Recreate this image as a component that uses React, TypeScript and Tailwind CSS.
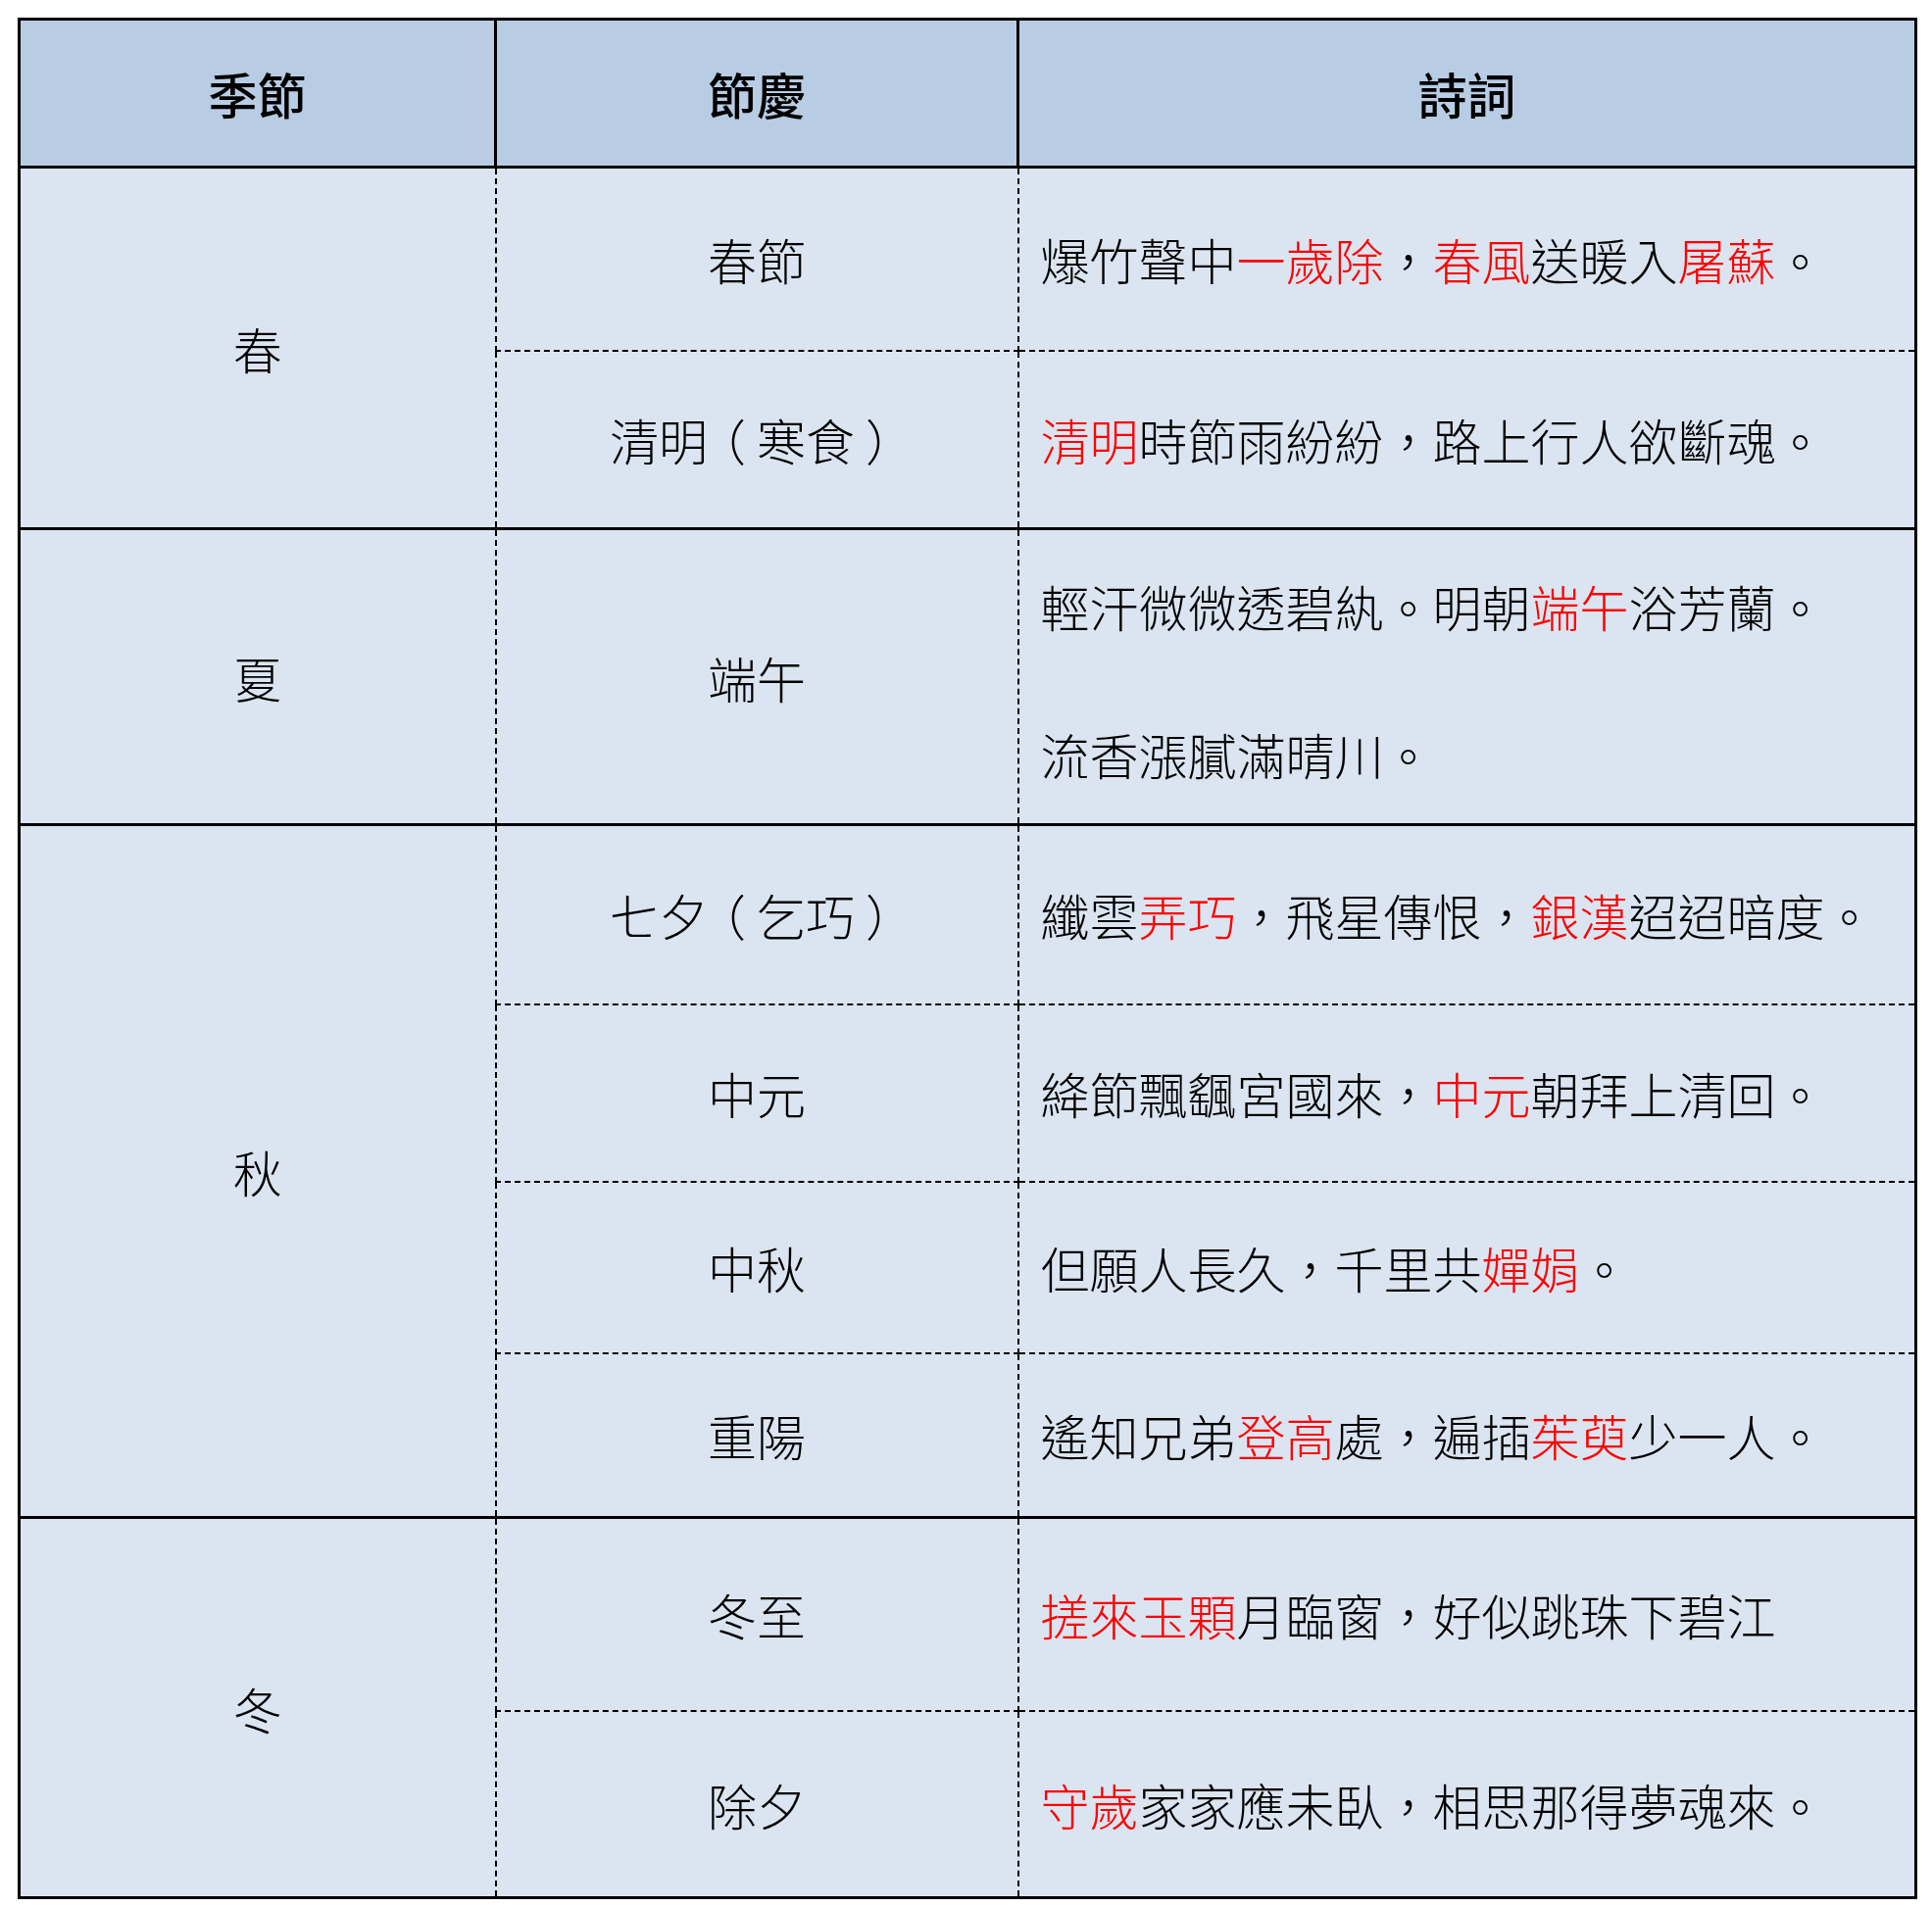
import React from 'react';

type Row = { fest: string; h: string; poem: string[] };
type Season = { name: string; rows: Row[] };

// {…} marks the words printed in red
const seasons: Season[] = [
  {
    name: '春',
    rows: [
      { fest: '春節', h: 'h-[187px]', poem: ['爆竹聲中{一歲除}，{春風}送暖入{屠蘇}。'] },
      { fest: '清明（寒食）', h: 'h-[182px]', poem: ['{清明}時節雨紛紛，路上行人欲斷魂。'] },
    ],
  },
  {
    name: '夏',
    rows: [
      { fest: '端午', h: 'h-[302px]', poem: ['輕汗微微透碧紈。明朝{端午}浴芳蘭。', '流香漲膩滿晴川。'] },
    ],
  },
  {
    name: '秋',
    rows: [
      { fest: '七夕（乞巧）', h: 'h-[183px]', poem: ['纖雲{弄巧}，飛星傳恨，{銀漢}迢迢暗度。'] },
      { fest: '中元', h: 'h-[181px]', poem: ['絳節飄颻宮國來，{中元}朝拜上清回。'] },
      { fest: '中秋', h: 'h-[175px]', poem: ['但願人長久，千里共{嬋娟}。'] },
      { fest: '重陽', h: 'h-[168px]', poem: ['遙知兄弟{登高}處，遍插{茱萸}少一人。'] },
    ],
  },
  {
    name: '冬',
    rows: [
      { fest: '冬至', h: 'h-[197px]', poem: ['{搓來玉顆}月臨窗，好似跳珠下碧江'] },
      { fest: '除夕', h: 'h-[191px]', poem: ['{守歲}家家應未臥，相思那得夢魂來。'] },
    ],
  },
];

function Line({ text }: { text: string }) {
  const parts = text.split(/(\{[^}]*\})/).filter(Boolean);
  return (
    <>
      {parts.map((p, i) =>
        p.startsWith('{') ? (
          <span key={i} className="text-[#ff0000]">
            {p.slice(1, -1)}
          </span>
        ) : (
          <span key={i}>{p}</span>
        )
      )}
    </>
  );
}

// full-width brackets sit centred in their cell, as in the source document:
// half-width alternates plus margins keep each bracket 50px wide
function Festival({ name }: { name: string }) {
  const parts = name.split(/([（）])/).filter(Boolean);
  return (
    <>
      {parts.map((p, i) =>
        p === '（' ? (
          <span key={i} className="ml-[14px] mr-[11px] [font-feature-settings:'halt']">{p}</span>
        ) : p === '）' ? (
          <span key={i} className="ml-[11px] mr-[14px] [font-feature-settings:'halt']">{p}</span>
        ) : (
          <span key={i}>{p}</span>
        )
      )}
    </>
  );
}

export default function App() {
  return (
    <div className="min-h-screen bg-white pt-[18px] pl-[18px] font-['Noto_Sans_CJK_TC',sans-serif] text-black [text-spacing-trim:space-all]">
      <table className="table-fixed border-collapse w-[1935px]">
        <colgroup>
          <col className="w-[486px]" />
          <col className="w-[533px]" />
          <col className="w-[916px]" />
        </colgroup>
        <thead>
          <tr>
            {['季節', '節慶', '詩詞'].map((h) => (
              <th
                key={h}
                className="h-[151px] border-[3px] border-black bg-[#b8cce4] text-center align-middle text-[50px] font-medium leading-none"
              >
                {h}
              </th>
            ))}
          </tr>
        </thead>
        <tbody className="font-light">
          {seasons.map((s) =>
            s.rows.map((r, i) => {
              const last = i === s.rows.length - 1;
              const bottom = last
                ? 'border-b-[3px]'
                : 'border-b-2 [border-bottom-style:dashed]';
              return (
                <tr key={r.fest} className="bg-[#dbe5f1]">
                  {i === 0 && (
                    <td
                      rowSpan={s.rows.length}
                      className="border-l-[3px] border-b-[3px] border-black text-center align-middle text-[50px] leading-none"
                    >
                      {s.name}
                    </td>
                  )}
                  <td
                    className={`${r.h} ${bottom} border-l-2 border-r-2 [border-left-style:dashed] [border-right-style:dashed] border-black text-center align-middle text-[50px] leading-none`}
                  >
                    <Festival name={r.fest} />
                  </td>
                  <td
                    className={`${bottom} border-l-2 [border-left-style:dashed] border-r-[3px] border-black pl-[22px] align-middle text-[50px] leading-none`}
                  >
                    <div className={`flex flex-col ${r.poem.length > 1 ? 'gap-[101px] pt-[5px]' : ''}`}>
                      {r.poem.map((line) => (
                        <div key={line} className="whitespace-nowrap">
                          <Line text={line} />
                        </div>
                      ))}
                    </div>
                  </td>
                </tr>
              );
            })
          )}
        </tbody>
      </table>
    </div>
  );
}
